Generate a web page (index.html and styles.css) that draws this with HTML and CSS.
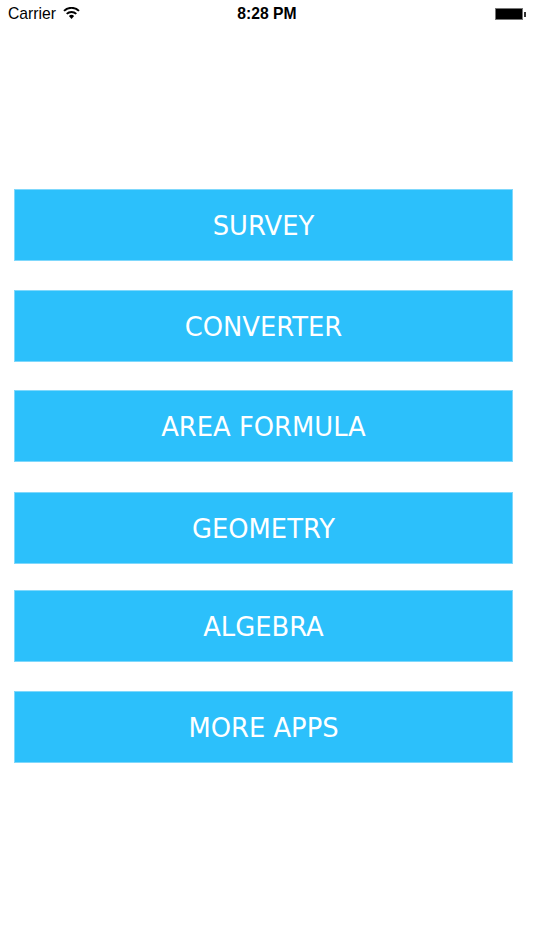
FILE: index.html
```html
<!DOCTYPE html>
<html lang="en">
<head>
  <meta charset="UTF-8">
  <meta name="viewport" content="width=device-width, initial-scale=1.0">
  <title>Menu</title>
  <link rel="stylesheet" href="styles.css">
</head>
<body>
  <header class="status-bar">
    <div class="status-left">
      <span class="carrier">Carrier</span>
      <svg class="wifi" width="17" height="12" viewBox="0 0 17 12" aria-hidden="true">
        <path d="M8.5 12 5.9 9a3.6 3.6 0 0 1 5.2 0Z" fill="#000"/>
        <path d="M3.7 6.9a6.9 6.9 0 0 1 9.6 0" fill="none" stroke="#000" stroke-width="2"/>
        <path d="M1 3.9a10.8 10.8 0 0 1 15 0" fill="none" stroke="#000" stroke-width="2"/>
      </svg>
    </div>
    <div class="clock">8:28 PM</div>
    <div class="battery">
      <span class="battery-body"></span>
      <span class="battery-tip"></span>
    </div>
  </header>

  <nav class="menu">
    <a class="menu-btn" href="#">SURVEY</a>
    <a class="menu-btn" href="#">CONVERTER</a>
    <a class="menu-btn" href="#">AREA FORMULA</a>
    <a class="menu-btn" href="#">GEOMETRY</a>
    <a class="menu-btn" href="#">ALGEBRA</a>
    <a class="menu-btn" href="#">MORE APPS</a>
  </nav>
</body>
</html>
```

FILE: styles.css
```css
html, body {
  height: 100%;
}
body {
  margin: 0;
  background-color: #fff;
  color: #000;
  font-family: 'DejaVu Sans', sans-serif;
  overflow: hidden;
}
.status-bar {
  display: flex;
  justify-content: space-between;
  align-items: center;
  height: 28px;
  padding: 0 8px;
  font-family: 'Liberation Sans', sans-serif;
  font-size: 15.7px;
}
.status-left {
  display: flex;
  align-items: center;
  gap: 7px;
  width: 110px;
}
.wifi {
  margin-bottom: 2px;
}
.clock {
  font-weight: bold;
}
.battery {
  display: flex;
  align-items: center;
  justify-content: flex-end;
  gap: 1px;
  width: 110px;
}
.battery-body {
  box-sizing: border-box;
  width: 28px;
  height: 12px;
  background-color: #000;
  border: 1px solid #777;
}
.battery-tip {
  width: 2px;
  height: 5px;
  background-color: #333;
}
.menu {
  display: flex;
  flex-direction: column;
  padding: 161px 21px 0 14px;
}
.menu-btn {
  display: flex;
  align-items: center;
  justify-content: center;
  box-sizing: border-box;
  height: 72px;
  padding-top: 2px;
  background-color: #2cc0fb;
  border: 1px solid #7fd8fc;
  color: #fff;
  font-size: 25.8px;
  text-decoration: none;
}
.menu-btn:nth-child(2) {
  margin-top: 29px;
}
.menu-btn:nth-child(3) {
  margin-top: 28px;
}
.menu-btn:nth-child(4) {
  margin-top: 30px;
}
.menu-btn:nth-child(5) {
  margin-top: 26px;
}
.menu-btn:nth-child(6) {
  margin-top: 29px;
}
```
